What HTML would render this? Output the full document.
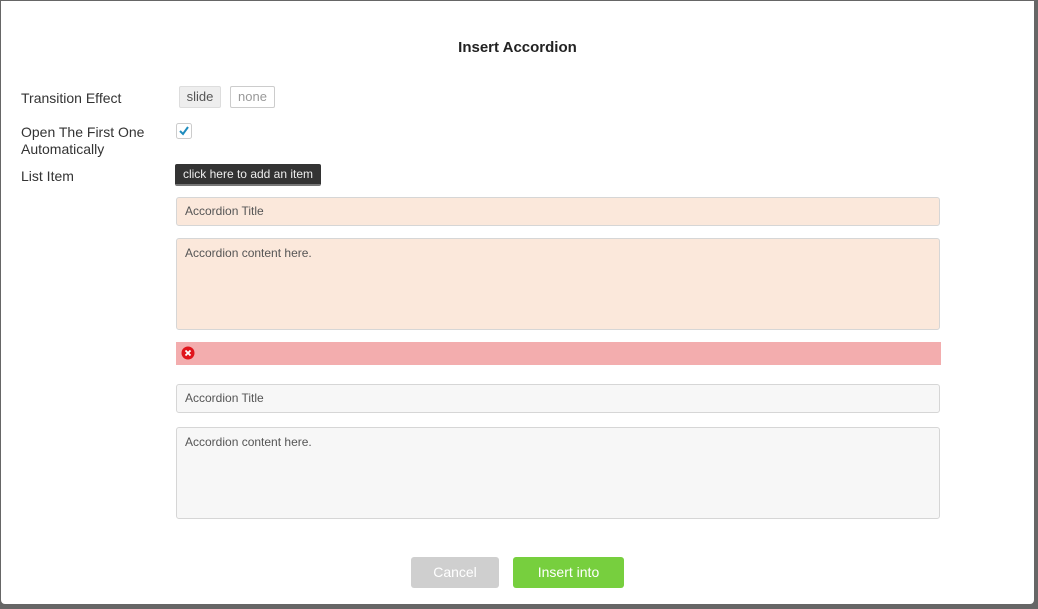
<!DOCTYPE html>
<html><head><style>
html,body{margin:0;padding:0;}
body{width:1038px;height:609px;background:#666;position:relative;overflow:hidden;font-family:"Liberation Sans",sans-serif;}
#d{position:absolute;left:1px;top:1px;width:1033px;height:603px;background:#fff;border-radius:0 0 4px 4px;}
.a{position:absolute;}
.lbl{font-size:14px;color:#333;}
.in{position:absolute;left:175px;width:764px;border:1px solid #d6d6d6;border-radius:3px;font-size:12px;color:#555;box-sizing:border-box;padding:0 8px;}
</style></head><body>
<div id="d">
<div class="a" style="left:0;width:1033px;top:38px;text-align:center;font-size:15px;font-weight:bold;color:#222;">Insert Accordion</div>
<div class="a lbl" style="left:20px;top:89px;">Transition Effect</div>
<div class="a" style="left:178px;top:85px;width:42px;height:22px;background:#eee;border:1px solid #ddd;box-sizing:border-box;border-radius:2px;font-size:13px;color:#555;text-align:center;line-height:20px;">slide</div>
<div class="a" style="left:229px;top:85px;width:45px;height:22px;background:#fff;border:1px solid #ccc;box-sizing:border-box;border-radius:2px;font-size:13px;color:#999;text-align:center;line-height:20px;">none</div>
<div class="a lbl" style="left:20px;top:123px;line-height:17px;">Open The First One<br>Automatically</div>
<svg class="a" style="left:175px;top:122px" width="16" height="16"><rect x="0.5" y="0.5" width="15" height="15" rx="2" fill="#fff" stroke="#ccc"/><path d="M4 8 L7 11 L12 4" stroke="#1e8cbe" stroke-width="2" fill="none"/></svg>
<div class="a lbl" style="left:20px;top:167px;">List Item</div>
<div class="a" style="left:174px;top:163px;width:146px;height:20px;background:#333;border-bottom:2px solid #777;border-radius:2px;color:#eee;font-size:12px;line-height:20px;text-align:center;">click here to add an item</div>
<div class="in" style="top:196px;height:29px;background:#fbe8db;line-height:27px;">Accordion Title</div>
<div class="in" style="top:237px;height:92px;background:#fbe8db;padding-top:7px;">Accordion content here.</div>
<div class="a" style="left:175px;top:341px;width:765px;height:23px;background:#f3adae;"></div>
<svg class="a" style="left:180px;top:345px" width="14" height="14"><circle cx="7" cy="7" r="6.5" fill="#e0141b"/><path d="M4.5 4.5L9.5 9.5M9.5 4.5L4.5 9.5" stroke="#fff" stroke-width="1.8"/></svg>
<div class="in" style="top:383px;height:29px;background:#f7f7f7;line-height:27px;">Accordion Title</div>
<div class="in" style="top:426px;height:92px;background:#f7f7f7;padding-top:7px;">Accordion content here.</div>
<div class="a" style="left:410px;top:556px;width:88px;height:31px;background:#cfcfcf;border-radius:3px;color:#fff;font-size:14px;text-align:center;line-height:31px;">Cancel</div>
<div class="a" style="left:512px;top:556px;width:111px;height:31px;background:#77cf3e;border-radius:3px;color:#fff;font-size:14px;text-align:center;line-height:31px;">Insert into</div>
</div>
</body></html>
